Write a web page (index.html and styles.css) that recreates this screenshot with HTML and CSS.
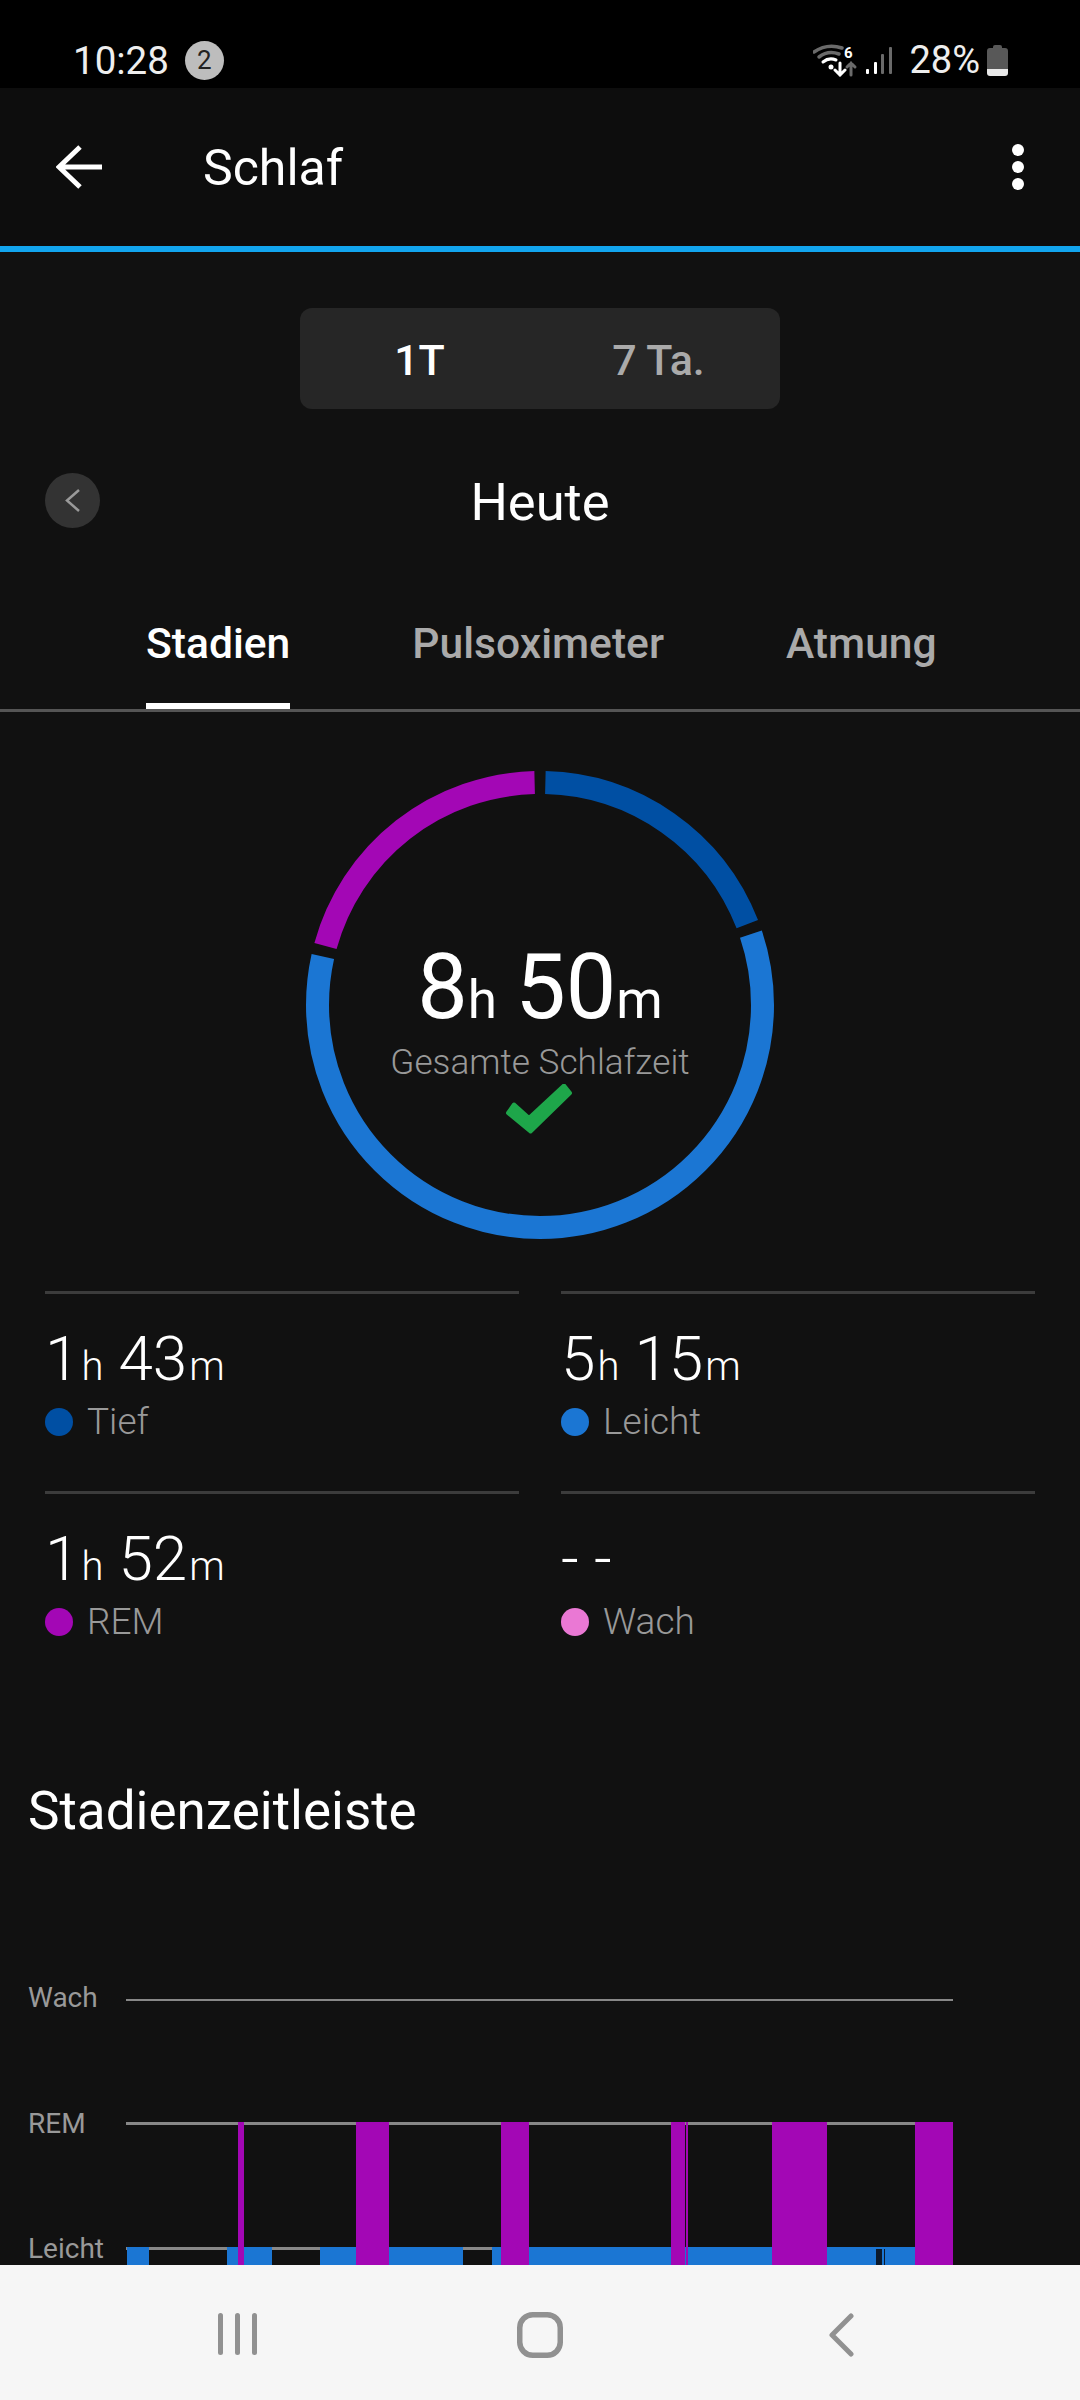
FILE: index.html
```html
<!DOCTYPE html>
<html lang="de">
	<head>
		<meta charset="UTF-8">
		<title>Schlaf</title>
		<link rel="stylesheet" href="styles.css">
	</head>
	<body>
		<div class="screen">

			<!-- status bar -->
			<div class="status-bar">
				<div class="status-left">
					<span class="status-time">10:28</span>
					<span class="status-badge">2</span>
				</div>
				<div class="status-right">
					<svg class="icon-wifi" width="45" height="33" viewBox="0 0 45 33" fill="none" stroke-linecap="round">
						<path d="M1 8Q14 -1 29 4" stroke="#6a6a6a" stroke-width="3.5"/>
						<path d="M6 13Q15 6 26 10" stroke="#6a6a6a" stroke-width="3.5"/>
						<path d="M10 18Q16 13 23 16" stroke="#fff" stroke-width="3"/>
						<circle cx="18" cy="23" r="2.5" fill="#fff"/>
						<path d="M27 19V31M22 26L27 31L32 26" stroke="#fff" stroke-width="3"/>
						<path d="M38 19V31M34 23L38 19L42 23" stroke="#6a6a6a" stroke-width="3"/>
						<text x="31" y="14" class="wifi-six">6</text>
					</svg>
					<svg class="icon-signal" width="27" height="27" viewBox="0 0 27 27">
						<rect x="0" y="22" width="3" height="5" rx="1" fill="#fff"/>
						<rect x="8" y="15" width="3" height="12" rx="1" fill="#fff"/>
						<rect x="15" y="7" width="3" height="20" rx="1" fill="#6a6a6a"/>
						<rect x="23" y="0" width="3" height="27" rx="1" fill="#6a6a6a"/>
					</svg>
					<span class="status-percent">28%</span>
					<svg class="icon-battery" width="21" height="31" viewBox="0 0 21 31">
						<path d="M6 3V2Q6 0 8 0H13Q15 0 15 2V3H18Q21 3 21 6V24H0V6Q0 3 3 3Z" fill="#585858"/>
						<path d="M0 24H21V28Q21 31 18 31H3Q0 31 0 28Z" fill="#e8e8e8"/>
					</svg>
				</div>
			</div>

			<!-- toolbar -->
			<div class="toolbar">
				<svg class="icon-back" width="46" height="44" viewBox="0 0 46 44" fill="none" stroke="#fff" stroke-width="5">
					<path d="M46 22H4M24 2L3 22L24 42"/>
				</svg>
				<span class="toolbar-title">Schlaf</span>
				<div class="kebab">
					<span></span>
					<span></span>
					<span></span>
				</div>
			</div>
			<div class="progress-line"></div>

			<div class="content">

				<div class="segment">
					<span class="segment-item segment-active">1T</span>
					<span class="segment-item">7 Ta.</span>
				</div>

				<div class="date-row">
					<div class="date-prev">
						<svg width="15" height="23" viewBox="0 0 15 23" fill="none" stroke="#9a9a9a" stroke-width="2.5">
							<path d="M14 1L2 11.5L14 22"/>
						</svg>
					</div>
					<span class="date-label">Heute</span>
				</div>

				<div class="tabs">
					<span class="tab tab-active">Stadien</span>
					<span class="tab">Pulsoximeter</span>
					<span class="tab">Atmung</span>
				</div>

				<!-- ring -->
				<div class="ring-wrap">
					<div class="ring">
						<svg class="ring-svg" width="468" height="468" viewBox="0 0 468 468" fill="none">
							<circle class="ring-arc" cx="234" cy="234" r="222.5" pathLength="360" stroke="#004fa3" stroke-dasharray="67.3 360" stroke-dashoffset="-1.4"/>
							<circle class="ring-arc" cx="234" cy="234" r="222.5" pathLength="360" stroke="#1b76d3" stroke-dasharray="211.2 360" stroke-dashoffset="-71.4"/>
							<circle class="ring-arc" cx="234" cy="234" r="222.5" pathLength="360" stroke="#a307b5" stroke-dasharray="73.2 360" stroke-dashoffset="-285.4"/>
						</svg>
						<div class="ring-text">
							<div class="ring-time">8<small class="ring-hours">h </small>50<small>m</small></div>
							<div class="ring-label">Gesamte Schlafzeit</div>
							<svg class="ring-check" width="70" height="52" viewBox="0 0 70 52">
								<path d="M9 20.500L24 34L59 1.500L65 9L25.500 47.500L3 29Z" fill="#1ea64a" stroke="#1ea64a" stroke-width="4" stroke-linejoin="round"/>
							</svg>
						</div>
					</div>
				</div>

				<!-- stats -->
				<div class="stats">
					<div class="stat">
						<div class="stat-value">1<small>h</small> 43<small>m</small></div>
						<div class="stat-label"><span class="dot dot-deep"></span>Tief</div>
					</div>
					<div class="stat">
						<div class="stat-value">5<small>h</small> 15<small>m</small></div>
						<div class="stat-label"><span class="dot dot-light"></span>Leicht</div>
					</div>
					<div class="stat">
						<div class="stat-value">1<small>h</small> 52<small>m</small></div>
						<div class="stat-label"><span class="dot dot-rem"></span>REM</div>
					</div>
					<div class="stat">
						<div class="stat-value">- -</div>
						<div class="stat-label"><span class="dot dot-awake"></span>Wach</div>
					</div>
				</div>

				<h2 class="section-title">Stadienzeitleiste</h2>

				<!-- timeline, y positions are the chart itself -->
				<div class="timeline">
					<div class="timeline-labels">
						<span>Wach</span>
						<span>REM</span>
						<span>Leicht</span>
					</div>
					<svg class="timeline-svg" width="827" height="300" viewBox="126 1990 827 300">
						<rect x="126" y="2000" width="827" height="2" fill="#888"/>
						<rect x="126" y="2123" width="827" height="3" fill="#888"/>
						<rect x="126" y="2248" width="827" height="3" fill="#888"/>
						<g fill="#1b76d3">
							<rect x="127" y="2248" width="22" height="42"/>
							<rect x="227" y="2248" width="45" height="42"/>
							<rect x="320" y="2248" width="143" height="42"/>
							<rect x="492" y="2248" width="391" height="42"/>
							<rect x="883" y="2248" width="32" height="42"/>
						</g>
						<g fill="#a307b5">
							<rect x="238" y="2123" width="6" height="167"/>
							<rect x="356" y="2123" width="33" height="167"/>
							<rect x="501" y="2123" width="28" height="167"/>
							<rect x="671" y="2123" width="14" height="167"/>
							<rect x="686" y="2123" width="2" height="167"/>
							<rect x="772" y="2123" width="55" height="167"/>
							<rect x="915" y="2123" width="38" height="167"/>
						</g>
						<rect x="876" y="2250" width="6" height="40" fill="#0c1a2c"/>
						<rect x="884" y="2250" width="1" height="40" fill="#0c1a2c"/>
					</svg>
				</div>
			</div>

			<!-- navigation bar -->
			<div class="nav-bar">
				<svg class="nav-icon" width="40" height="42" viewBox="0 0 40 42" fill="#919191">
					<rect x="0" y="0" width="5" height="42" rx="2.5"/>
					<rect x="17" y="0" width="5" height="42" rx="2.5"/>
					<rect x="34" y="0" width="5" height="42" rx="2.5"/>
				</svg>
				<svg class="nav-icon" width="46" height="46" viewBox="0 0 46 46" fill="none" stroke="#919191" stroke-width="5.5">
					<rect x="2.750" y="2.750" width="40.500" height="40.500" rx="13"/>
				</svg>
				<svg class="nav-icon" width="26" height="44" viewBox="0 0 26 44" fill="none" stroke="#919191" stroke-width="5" stroke-linecap="round" stroke-linejoin="round">
					<path d="M23 3L4 22L23 41"/>
				</svg>
			</div>

		</div>
	</body>
</html>
```

FILE: styles.css
```css
/* all */
* {
	margin: 0;
	padding: 0;
	box-sizing: border-box;
}

body {
	width: 1080px;
	height: 2400px;
	overflow: hidden;
	font-family: Roboto, "Liberation Sans", sans-serif;
	background-color: #111;
}

.screen {
	display: flex;
	flex-direction: column;
	height: 2400px;
}

/* status bar */
.status-bar {
	display: flex;
	flex: none;
	justify-content: space-between;
	align-items: center;
	height: 88px;
	padding: 32px 72px 0 73px;
	background-color: #000;
	color: #eee;
}

.status-left,
.status-right {
	display: flex;
	align-items: center;
}

.status-time {
	font-size: 38.5px;
}

.status-badge {
	width: 39px;
	height: 39px;
	margin-left: 16px;
	border-radius: 50%;
	background-color: #bdbdbd;
	color: #222;
	font-size: 26px;
	line-height: 39px;
	text-align: center;
}

.wifi-six {
	fill: #fff;
	font-size: 15px;
	font-weight: 700;
	stroke: none;
}

.icon-signal {
	margin-left: 8px;
}

.status-percent {
	margin-left: 16px;
	font-size: 38px;
}

.icon-battery {
	margin-left: 7px;
}

/* toolbar */
.toolbar {
	display: flex;
	flex: none;
	align-items: center;
	height: 158px;
	padding: 0 56px;
	background-color: #0d0d0d;
}

.toolbar-title {
	margin-left: 101px;
	padding-top: 2px;
	color: #fff;
	font-size: 50px;
}

.kebab {
	display: flex;
	flex-direction: column;
	gap: 5px;
	margin-left: auto;
}

.kebab span {
	width: 12px;
	height: 12px;
	border-radius: 50%;
	background-color: #fff;
}

.progress-line {
	flex: none;
	height: 6px;
	background-color: #12a5ee;
}

.content {
	flex: 1;
	min-height: 0;
	overflow: hidden;
}

/* 1T / 7 Ta. */
.segment {
	display: flex;
	width: 480px;
	height: 101px;
	margin: 56px auto 0;
	padding-right: 2px;
	border-radius: 12px;
	background-color: #262626;
}

.segment-item {
	flex: 1;
	color: #aaa;
	font-size: 43px;
	font-weight: 500;
	line-height: 105px;
	text-align: center;
}

.segment-active {
	color: #fff;
}

/* date */
.date-row {
	position: relative;
	display: flex;
	justify-content: center;
	align-items: center;
	height: 56px;
	margin-top: 64px;
}

.date-prev {
	position: absolute;
	left: 45px;
	top: 0;
	display: flex;
	justify-content: center;
	align-items: center;
	width: 55px;
	height: 55px;
	border-radius: 50%;
	background-color: #333;
}

.date-label {
	padding-top: 2px;
	color: #fff;
	font-size: 52.5px;
}

/* tabs */
.tabs {
	display: flex;
	height: 127px;
	margin-top: 56px;
	padding-top: 28px;
	border-bottom: 3px solid #555;
}

.tab {
	height: 96px;
	color: #aaa;
	font-size: 42.6px;
	font-weight: 500;
	line-height: 60px;
	margin-left: 122px;
}

.tab:first-child {
	margin-left: 146px;
}

.tab-active {
	border-bottom: 6px solid #fff;
	color: #fff;
}

/* ring */
.ring-wrap {
	display: flex;
	justify-content: center;
	margin-top: 59px;
}

.ring {
	position: relative;
	width: 468px;
	height: 468px;
}

.ring-svg {
	position: absolute;
	left: 0;
	top: 0;
}

.ring-arc {
	stroke-width: 23;
	transform: rotate(-90deg);
	transform-origin: 234px 234px;
}

.ring-text {
	position: absolute;
	left: 0;
	right: 0;
	top: 167px;
	display: flex;
	flex-direction: column;
	align-items: center;
}

.ring-time {
	color: #fff;
	font-size: 90px;
	line-height: 100px;
}

.ring-time small {
	font-size: 53px;
	line-height: 0;
}

.ring-time .ring-hours {
	margin-right: 5px;
}

.ring-label {
	margin-top: 2px;
	color: #999;
	font-size: 35.2px;
	font-weight: 300;
	line-height: 44px;
}

.ring-check {
	margin-top: 0;
}

/* stats */
.stats {
	display: grid;
	grid-template-columns: 474px 474px;
	column-gap: 42px;
	margin: 52px 45px 0;
}

.stat {
	height: 200px;
	border-top: 3px solid #3c3c3c;
	padding-top: 29px;
}

.stat-value {
	color: #fff;
	font-size: 62px;
	font-weight: 300;
	line-height: 72px;
}

.stat-value small {
	font-size: 40px;
	line-height: 0;
	margin-left: 2px;
}

.stat-label {
	display: flex;
	align-items: center;
	gap: 14px;
	margin-top: 5px;
	color: #999;
	font-size: 37px;
	font-weight: 300;
	line-height: 44px;
}

.dot {
	width: 28px;
	height: 28px;
	border-radius: 50%;
}

.dot-deep {
	background-color: #004fa3;
}

.dot-light {
	background-color: #1b76d3;
}

.dot-rem {
	background-color: #a307b5;
}

.dot-awake {
	background-color: #ea78d4;
}

.section-title {
	margin: 88px 0 0 28px;
	color: #fff;
	font-size: 53px;
	font-weight: 400;
	line-height: 64px;
}

/* timeline */
.timeline {
	position: relative;
	height: 400px;
	margin-top: 146px;
}

.timeline-labels span {
	position: absolute;
	left: 28px;
	color: #999;
	font-size: 28px;
	line-height: 34px;
}

.timeline-labels span:nth-child(1) {
	top: -8px;
}

.timeline-labels span:nth-child(2) {
	top: 118px;
}

.timeline-labels span:nth-child(3) {
	top: 243px;
}

.timeline-svg {
	position: absolute;
	left: 126px;
	top: 0;
}

/* navigation bar */
.nav-bar {
	position: relative;
	display: flex;
	flex: none;
	height: 135px;
	padding-top: 48px;
	background-color: #f6f6f6;
}

.nav-icon:nth-child(1) {
	margin-left: 218px;
}

.nav-icon:nth-child(2) {
	margin-left: 259px;
	margin-top: -1px;
}

.nav-icon:nth-child(3) {
	margin-left: 265px;
}
```
